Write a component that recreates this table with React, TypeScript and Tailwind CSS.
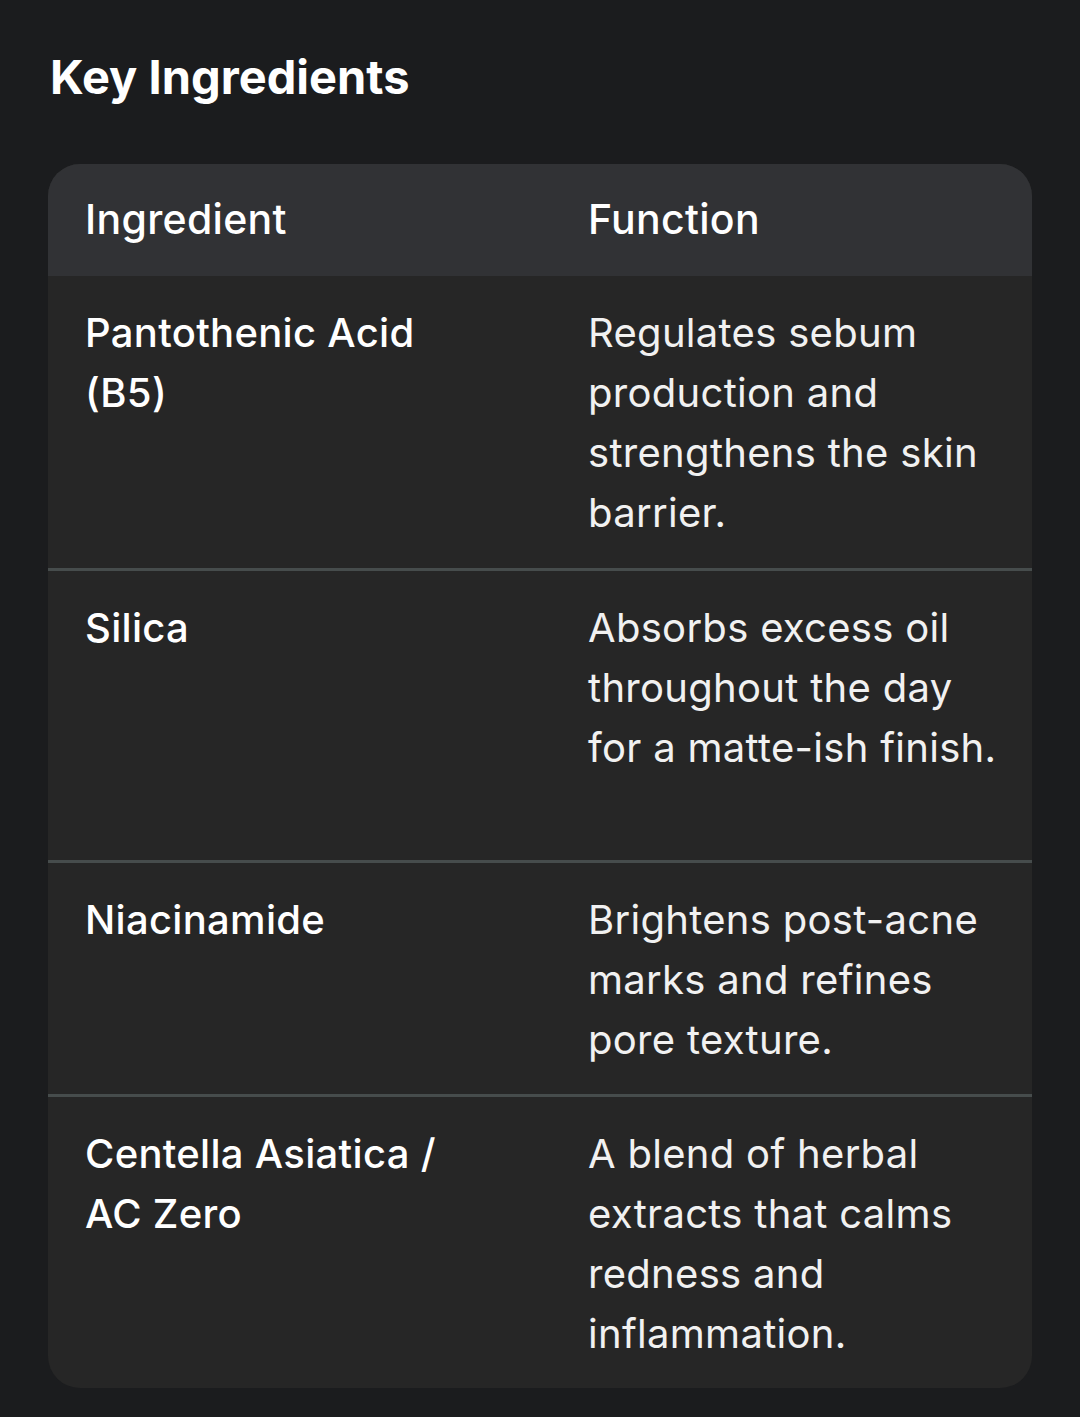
import React from 'react';

const rows = [
  {
    name: 'Pantothenic Acid (B5)',
    fn: 'Regulates sebum production and strengthens the skin barrier.',
    h: 'h-[292px]',
  },
  {
    name: 'Silica',
    fn: 'Absorbs excess oil throughout the day for a matte-ish finish.',
    h: 'h-[292px]',
  },
  {
    name: 'Niacinamide',
    fn: 'Brightens post-acne marks and refines pore texture.',
    h: 'h-[234px]',
  },
  {
    name: 'Centella Asiatica / AC Zero',
    fn: 'A blend of herbal extracts that calms redness and inflammation.',
    h: 'h-[294px]',
  },
];

export default function App() {
  return (
    <div
      className="min-h-[1417px] w-[1080px] bg-[#1b1c1e] text-white"
      style={{ fontFamily: 'Inter, Roboto, "Noto Sans", sans-serif' }}
    >
      <div className="pl-[48px] pr-[48px] pt-[48px]">
        <h2 className="ml-[2px] text-[47px] font-bold leading-[58px]">Key Ingredients</h2>

        <div className="mt-[58px] overflow-hidden rounded-[32px] bg-[#262626]">
          <div className="grid h-[112px] grid-cols-[500px_1fr] items-center bg-[#313235] text-[41px] font-medium tracking-[0.3px]">
            <div className="pl-[37px]">Ingredient</div>
            <div className="pl-[40px]">Function</div>
          </div>
          {rows.map((r, i) => (
            <div
              key={r.name}
              className={`grid grid-cols-[500px_1fr] items-start pt-[27px] text-[40px] leading-[60px] tracking-[0.3px] ${r.h} ${
                i > 0 ? 'border-t-[3px] border-[#464c4c]' : ''
              }`}
            >
              <div className="pl-[37px] pr-[83px] font-medium">{r.name}</div>
              <div className="pl-[40px] pr-[24px] text-[#f1f1f1]">{r.fn}</div>
            </div>
          ))}
        </div>
      </div>
    </div>
  );
}
